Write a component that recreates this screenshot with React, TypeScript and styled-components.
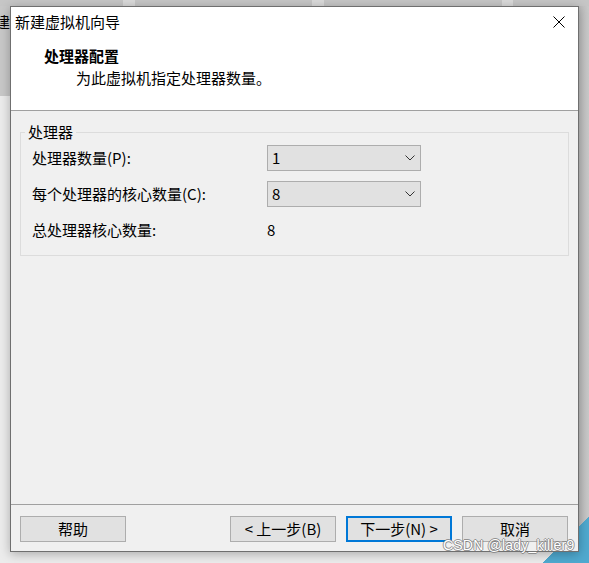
import React from 'react';
import styled, { createGlobalStyle } from 'styled-components';

const GlobalStyle = createGlobalStyle`
  html, body {
    margin: 0;
    padding: 0;
    background: #ececec;
  }
  body {
    font-family: "Noto Sans CJK SC", "Noto Sans", sans-serif;
    font-size: 15px;
    color: #000000;
  }
`;

const Desktop = styled.div`
  position: relative;
  width: 589px;
  height: 563px;
  overflow: hidden;
  box-sizing: border-box;
  padding: 6px 0 0 10px;
  background:
    linear-gradient(#dadada, #dadada) 123px 0 / 12px 6px no-repeat,
    linear-gradient(#dadada, #dadada) 312px 0 / 12px 6px no-repeat,
    linear-gradient(#dadada, #dadada) 502px 0 / 11px 6px no-repeat,
    linear-gradient(#c6c6c6, #c6c6c6) 0 0 / 100% 6px no-repeat,
    linear-gradient(#c8c8c8, #c8c8c8) 0 0 / 10px 96px no-repeat,
    linear-gradient(135deg, transparent 62%, #4fa9cf 62%) 540px 490px / 49px 73px no-repeat,
    linear-gradient(90deg, #bdbdbd, #c9c9c9) 579px 0 / 10px 100% no-repeat,
    #ececec;
`;

// piece of the window title lying behind the dialog
const BehindTitle = styled.span`
  position: absolute;
  left: -5px;
  top: 12px;
  line-height: 20px;
`;

const Dialog = styled.div`
  width: 569px;
  height: 546px;
  box-sizing: border-box;
  border: 1px solid #6f6f6f;
  background: #f0f0f0;
  display: flex;
  flex-direction: column;
  position: relative;
  box-shadow: 0 2px 10px rgba(0, 0, 0, 0.28);
`;

const Header = styled.div`
  height: 103px;
  background: #ffffff;
  border-bottom: 1px solid #a0a0a0;
  display: flex;
  flex-direction: column;
`;

const TitleBar = styled.div`
  height: 30px;
  display: flex;
  align-items: center;
  justify-content: space-between;
  padding: 0 13px 0 4px;
  line-height: 20px;
`;

const CloseButton = styled.div`
  width: 12px;
  height: 12px;
  display: flex;
`;

const Heading = styled.div`
  margin: 9px 0 0 33px;
  line-height: 20px;
  font-weight: 700;
`;

const SubHeading = styled.div`
  margin: 2px 0 0 65px;
  line-height: 20px;
`;

const Body = styled.div`
  flex: 1;
  padding: 11px 9px 0 9px;
`;

const GroupBox = styled.fieldset`
  margin: 0;
  border: 1px solid #dcdcdc;
  padding: 3px 11px 12px 11px;
  min-width: 0;
`;

const Legend = styled.legend`
  margin-left: -7px;
  padding: 0 3px;
  line-height: 20px;
`;

const FormGrid = styled.div`
  display: grid;
  grid-template-columns: 235px 154px;
  grid-auto-rows: 26px;
  row-gap: 10px;
  align-items: center;
`;

const Label = styled.div`
  line-height: 20px;
`;

const Select = styled.div`
  height: 26px;
  box-sizing: border-box;
  border: 1px solid #adadad;
  background: #e1e1e1;
  display: flex;
  align-items: center;
  justify-content: space-between;
  padding: 0 5px 0 4px;
  line-height: 20px;
`;

const Value = styled.div`
  line-height: 20px;
`;

const Footer = styled.div`
  height: 47px;
  box-sizing: border-box;
  border-top: 1px solid #a0a0a0;
  padding: 11px 10px 0 9px;
  display: flex;
  align-items: flex-start;
`;

const ButtonGroup = styled.div`
  margin-left: auto;
  display: flex;
  gap: 10px;
`;

const Button = styled.div<{ primary?: boolean }>`
  width: 106px;
  height: 26px;
  box-sizing: border-box;
  border: ${p => (p.primary ? '2px solid #0078d7' : '1px solid #adadad')};
  background: #e1e1e1;
  display: flex;
  align-items: center;
  justify-content: center;
  line-height: 20px;
`;

const Watermark = styled.div`
  position: absolute;
  left: 443px;
  top: 537px;
  font-family: "Liberation Sans", Arial, sans-serif;
  font-size: 14px;
  letter-spacing: 0.2px;
  line-height: 16px;
  color: #ffffff;
  text-shadow:
    1px 0 0 rgba(120, 120, 120, 0.75),
    -1px 0 0 rgba(120, 120, 120, 0.75),
    0 1px 0 rgba(120, 120, 120, 0.75),
    0 -1px 0 rgba(120, 120, 120, 0.75);
`;

const Chevron = () => (
  <svg width="10" height="6" viewBox="0 0 10 6">
    <polyline points="0.5,0.5 5,5 9.5,0.5" fill="none" stroke="#333" strokeWidth="1" />
  </svg>
);

const CloseIcon = () => (
  <svg width="12" height="12" viewBox="0 0 12 12">
    <line x1="0.5" y1="0.5" x2="11.5" y2="11.5" stroke="#000" strokeWidth="1" />
    <line x1="11.5" y1="0.5" x2="0.5" y2="11.5" stroke="#000" strokeWidth="1" />
  </svg>
);

const App: React.FC = () => {
  return (
    <>
      <GlobalStyle />
      <Desktop>
        <BehindTitle>建</BehindTitle>
        <Dialog>
          <Header>
            <TitleBar>
              <span>新建虚拟机向导</span>
              <CloseButton>
                <CloseIcon />
              </CloseButton>
            </TitleBar>
            <Heading>处理器配置</Heading>
            <SubHeading>为此虚拟机指定处理器数量。</SubHeading>
          </Header>

          <Body>
            <GroupBox>
              <Legend>处理器</Legend>
              <FormGrid>
                <Label>处理器数量(P):</Label>
                <Select>
                  <span>1</span>
                  <Chevron />
                </Select>
                <Label>每个处理器的核心数量(C):</Label>
                <Select>
                  <span>8</span>
                  <Chevron />
                </Select>
                <Label>总处理器核心数量:</Label>
                <Value>8</Value>
              </FormGrid>
            </GroupBox>
          </Body>

          <Footer>
            <Button>帮助</Button>
            <ButtonGroup>
              <Button>&lt; 上一步(B)</Button>
              <Button primary>下一步(N) &gt;</Button>
              <Button>取消</Button>
            </ButtonGroup>
          </Footer>
        </Dialog>
        <Watermark>CSDN @lady_killer9</Watermark>
      </Desktop>
    </>
  );
};

export default App;
